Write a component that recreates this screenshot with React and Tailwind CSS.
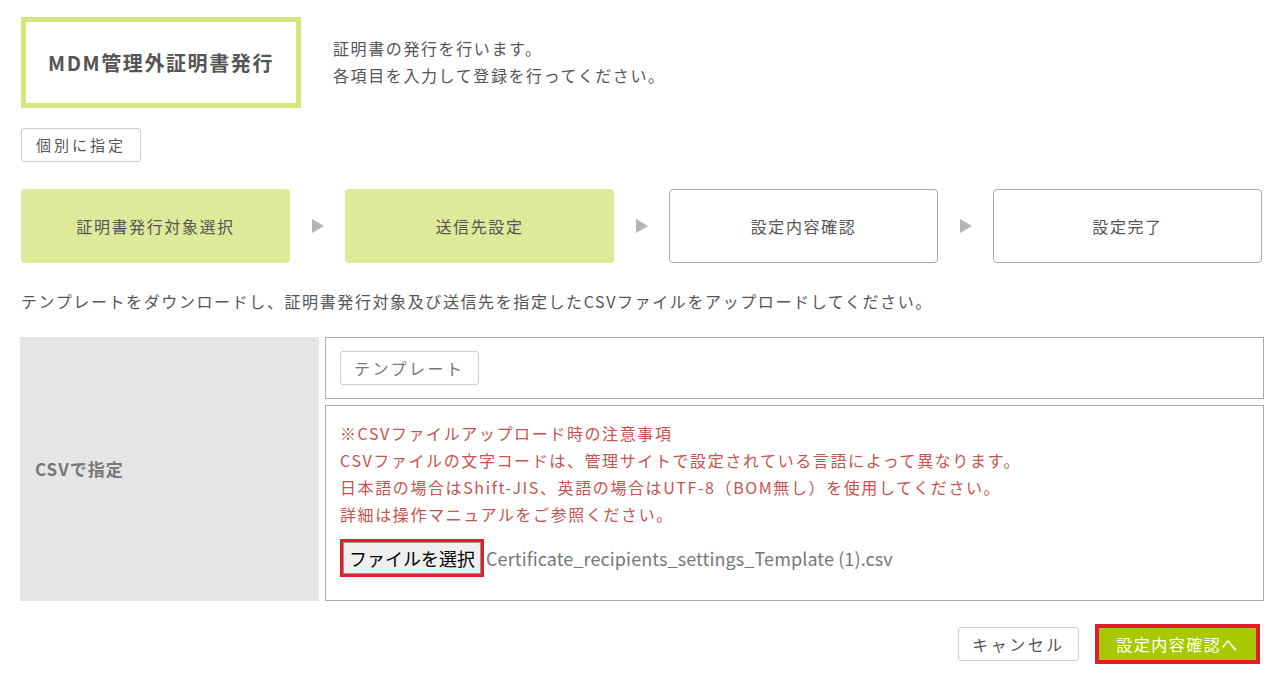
import React from "react";

const steps = [
  { label: "証明書発行対象選択", done: true },
  { label: "送信先設定", done: true },
  { label: "設定内容確認", done: false },
  { label: "設定完了", done: false },
];

const notes = [
  "※CSVファイルアップロード時の注意事項",
  "CSVファイルの文字コードは、管理サイトで設定されている言語によって異なります。",
  "日本語の場合はShift-JIS、英語の場合はUTF-8（BOM無し）を使用してください。",
  "詳細は操作マニュアルをご参照ください。",
];

const Arrow = () => (
  <div className="w-[55px] flex items-center justify-center">
    <svg width="12" height="14" viewBox="0 0 12 14">
      <polygon points="0,0 12,7 0,14" fill="#b3b3b3" />
    </svg>
  </div>
);

export default function App() {
  return (
    <div
      className="w-[1287px] h-[688px] bg-white text-[#555] px-[21px] pt-[17px]"
      style={{ fontFamily: '"Noto Sans CJK JP", "Noto Sans", sans-serif' }}
    >
      <div className="flex items-start">
        <div className="w-[280px] h-[91px] border-[5px] border-[#d6e57e] flex items-center justify-center">
          <span className="text-[20px] font-bold text-[#555] tracking-[1.6px]">MDM管理外証明書発行</span>
        </div>
        <div className="ml-[32px] mt-[18px] text-[16px] leading-[27px] tracking-[1.6px] text-[#555]">
          <p>証明書の発行を行います。</p>
          <p>各項目を入力して登録を行ってください。</p>
        </div>
      </div>

      <button className="mt-[20px] h-[34px] px-[14px] border border-[#ccc] rounded-[3px] text-[15px] tracking-[3px] text-[#555] bg-white">
        個別に指定
      </button>

      <div className="mt-[27px] flex">
        {steps.map((s, i) => (
          <React.Fragment key={s.label}>
            {i > 0 && <Arrow />}
            <div
              className={`w-[269px] h-[74px] rounded-[4px] flex items-center justify-center text-[16px] tracking-[1.6px] ${
                s.done ? "bg-[#dfe99a]" : "bg-white border border-[#aaa]"
              }`}
            >
              {s.label}
            </div>
          </React.Fragment>
        ))}
      </div>

      <p className="mt-[26px] text-[16px] leading-[24px] tracking-[1.6px]">
        テンプレートをダウンロードし、証明書発行対象及び送信先を指定したCSVファイルをアップロードしてください。
      </p>

      <div className="mt-[24px] flex ml-[-1px]">
        <div className="w-[299px] h-[264px] bg-[#e5e5e5] flex items-center pl-[15px]">
          <span className="text-[17px] font-bold text-[#777] tracking-[1px]">CSVで指定</span>
        </div>
        <div className="ml-[6px] flex flex-col gap-[6px] w-[939px]">
          <div className="h-[62px] border border-[#aaa] flex items-center px-[14px]">
            <button className="h-[34px] px-[13px] border border-[#ccc] rounded-[3px] bg-white text-[16px] tracking-[2.5px] text-[#777]">
              テンプレート
            </button>
          </div>
          <div className="h-[196px] border border-[#aaa] px-[14px] pt-[14px]">
            {notes.map((n) => (
              <p key={n} className="text-[16px] leading-[27px] tracking-[1.6px] text-[#c8524d]">
                {n}
              </p>
            ))}
            <div className="mt-[11px] flex items-center">
              <div className="border-[3px] border-[#e51c2c]">
                <button className="h-[32px] px-[5px] bg-[#efefef] border border-[#999] text-[18px] text-black leading-none">
                  ファイルを選択
                </button>
              </div>
              <span className="ml-[2px] text-[18px] tracking-[0.1px] text-[#777]">
                Certificate_recipients_settings_Template (1).csv
              </span>
            </div>
          </div>
        </div>
      </div>

      <div className="mt-[23px] flex justify-end items-center pr-[6px]">
        <button className="h-[34px] w-[121px] border border-[#ccc] rounded-[3px] bg-white text-[16px] tracking-[2.5px] text-[#555]">
          キャンセル
        </button>
        <div className="ml-[16px] border-[4px] border-[#e51c2c]">
          <button className="h-[32px] w-[157px] bg-[#a8c900] text-white text-[16px] tracking-[1.5px]">
            設定内容確認へ
          </button>
        </div>
      </div>
    </div>
  );
}
